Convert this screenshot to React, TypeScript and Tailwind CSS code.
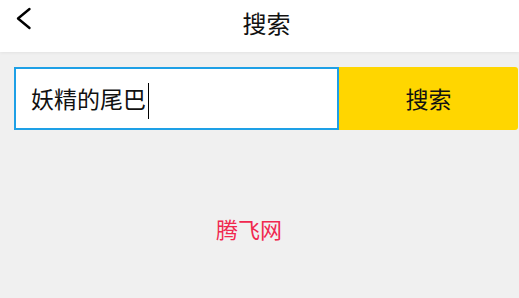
export default function App() {
    return (
        <div
            className="w-[519px] h-[298px] bg-[#f0f0f0] overflow-hidden"
            style={{ fontFamily: '"Noto Sans CJK SC", "Noto Sans", sans-serif' }}
        >
            {/* Header */}
            <div className="relative h-[52px] bg-white flex justify-center pl-[14px] pt-[10px] shadow-[0_1px_3px_rgba(0,0,0,0.06)]">
                <svg
                    className="absolute left-[14px] top-[5px]"
                    width="20"
                    height="27"
                    viewBox="0 0 20 27"
                    fill="none"
                    stroke="black"
                    strokeWidth="2.4"
                    strokeLinecap="round"
                    strokeLinejoin="round"
                >
                    <polyline points="15.5,4 4,13.5 15.5,23" />
                </svg>
                <span className="text-[24px] leading-[26px] text-[#111]">搜索</span>
            </div>

            {/* Search row */}
            <div className="flex mt-[15px] pl-[14px] pr-[1px]">
                <div className="w-[325px] shrink-0 h-[63px] bg-white border-2 border-[#1ea0e6] flex items-center pl-[15px]">
                    <span className="text-[23px] leading-none text-[#111]">妖精的尾巴</span>
                    <span className="w-px h-[36px] bg-black ml-[2px] mt-[4px]" />
                </div>
                <button className="flex-1 h-[63px] bg-[#ffd600] rounded-r-[3px] flex items-center justify-center">
                    <span className="text-[23px] leading-none text-[#111]">搜索</span>
                </button>
            </div>

            <div className="mt-[87px] pl-[216px]">
                <span className="text-[22px] leading-none text-[#f0284f]">腾飞网</span>
            </div>
        </div>
    );
}
